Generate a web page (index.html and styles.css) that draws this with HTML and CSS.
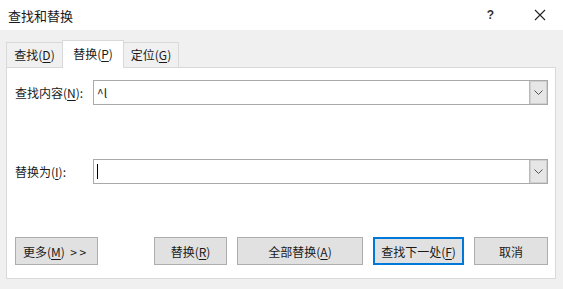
FILE: index.html
```html
<!DOCTYPE html>
<html lang="zh">
<head>
<meta charset="utf-8">
<link rel="stylesheet" href="styles.css">
</head>
<body>
<div class="dialog">
  <div class="titlebar">
    <span class="title">查找和替换</span>
    <span class="help">?</span>
    <svg class="close" width="12" height="12" viewBox="0 0 12 12"><path d="M1 1L11 11M11 1L1 11" stroke="#222" stroke-width="1.1" fill="none"/></svg>
  </div>
  <div class="body">
    <div class="tabs">
      <div class="tab">查找(<u>D</u>)</div>
      <div class="tab active">替换(<u>P</u>)</div>
      <div class="tab">定位(<u>G</u>)</div>
    </div>
    <div class="panel">
      <div class="fields">
        <label class="label">查找内容(<u>N</u>):</label>
        <div class="combo">
          <span class="value">^l</span>
          <span class="drop"><svg width="9" height="5" viewBox="0 0 9 5"><path d="M0.5 0.5L4.5 4.5L8.5 0.5" stroke="#555" fill="none"/></svg></span>
        </div>
        <label class="label second">替换为(<u>I</u>):</label>
        <div class="combo second">
          <span class="value"><span class="caret"></span></span>
          <span class="drop"><svg width="9" height="5" viewBox="0 0 9 5"><path d="M0.5 0.5L4.5 4.5L8.5 0.5" stroke="#555" fill="none"/></svg></span>
        </div>
      </div>
      <div class="buttons">
        <button class="btn more">更多(<u>M</u>)&nbsp; &gt; &gt;</button>
        <div class="spacer"></div>
        <button class="btn w73">替换(<u>R</u>)</button>
        <button class="btn w126">全部替换(<u>A</u>)</button>
        <button class="btn default w90">查找下一处(<u>F</u>)</button>
        <button class="btn w74">取消</button>
      </div>
    </div>
  </div>
</div>
</body>
</html>
```
FILE: styles.css
```css
* { box-sizing: border-box; }
html, body { margin: 0; padding: 0; }
body {
  width: 563px;
  height: 289px;
  background: #f0f0f0;
  font-family: "Noto Sans CJK SC", "Noto Sans", sans-serif;
  font-size: 12px;
  color: #1a1a1a;
  overflow: hidden;
}
u { text-decoration: underline; text-underline-offset: 2px; }
.titlebar {
  height: 30px;
  background: #fff;
  display: flex;
  align-items: center;
  padding-left: 8px;
}
.title { font-size: 13px; flex: 1; }
.help { font-size: 12px; font-family: "Liberation Sans", sans-serif; font-weight: bold; color: #333; margin-right: 40px; }
.close { margin-right: 17px; }
.body { padding: 9px 7px 0 6px; }
.tabs {
  display: flex;
  align-items: flex-end;
  height: 28px;
  position: relative;
  z-index: 1;
}
.tab {
  height: 25px;
  border: 1px solid #d9d9d9;
  border-bottom: none;
  background: #f0f0f0;
  padding: 0;
  display: flex;
  align-items: center;
  justify-content: center;
  white-space: nowrap;
  line-height: 1;
}
.tab:first-child { width: 57px; }
.tab.active {
  height: 28px;
  background: #fff;
  width: 62px;
  margin-bottom: -1px;
  margin-left: -1px;
  margin-right: -1px;
  padding-bottom: 2px;
}
.tab:last-child { width: 56px; }
.panel {
  height: 212px;
  background: #fff;
  border: 1px solid #d9d9d9;
  padding: 12px 7px 0 8px;
}
.fields {
  display: grid;
  grid-template-columns: 78px 1fr;
  row-gap: 54px;
  align-items: center;
}
.label { white-space: nowrap; }
.combo {
  height: 25px;
  border: 1px solid #a9a9a9;
  display: flex;
  align-items: stretch;
  background: #fff;
}
.value {
  flex: 1;
  padding-left: 3px;
  display: flex;
  align-items: center;
  font-size: 12px;
}
.caret { width: 1px; height: 15px; background: #000; margin-left: 0; }
.drop {
  width: 18px;
  border-left: 1px solid #b9b9b9;
  background: #e6e6e6;
  display: flex;
  align-items: center;
  justify-content: center;
  box-shadow: inset 0 0 0 1px #d0d0d0;
}
.buttons {
  display: flex;
  margin-top: 53px;
  gap: 10px;
}
.spacer { flex: 1; }
.btn {
  height: 28px;
  background: #e1e1e1;
  border: 1px solid #adadad;
  font-family: inherit;
  font-size: 12px;
  color: #1a1a1a;
  padding: 0;
  display: flex;
  align-items: center;
  justify-content: center;
  white-space: nowrap;
}
.more { width: 83px; justify-content: flex-start; padding-left: 7px; }
.w73 { width: 73px; }
.w126 { width: 126px; }
.w90 { width: 91px; }
.w74 { width: 74px; }
.default { border: 2px solid #0078d7; }
```
